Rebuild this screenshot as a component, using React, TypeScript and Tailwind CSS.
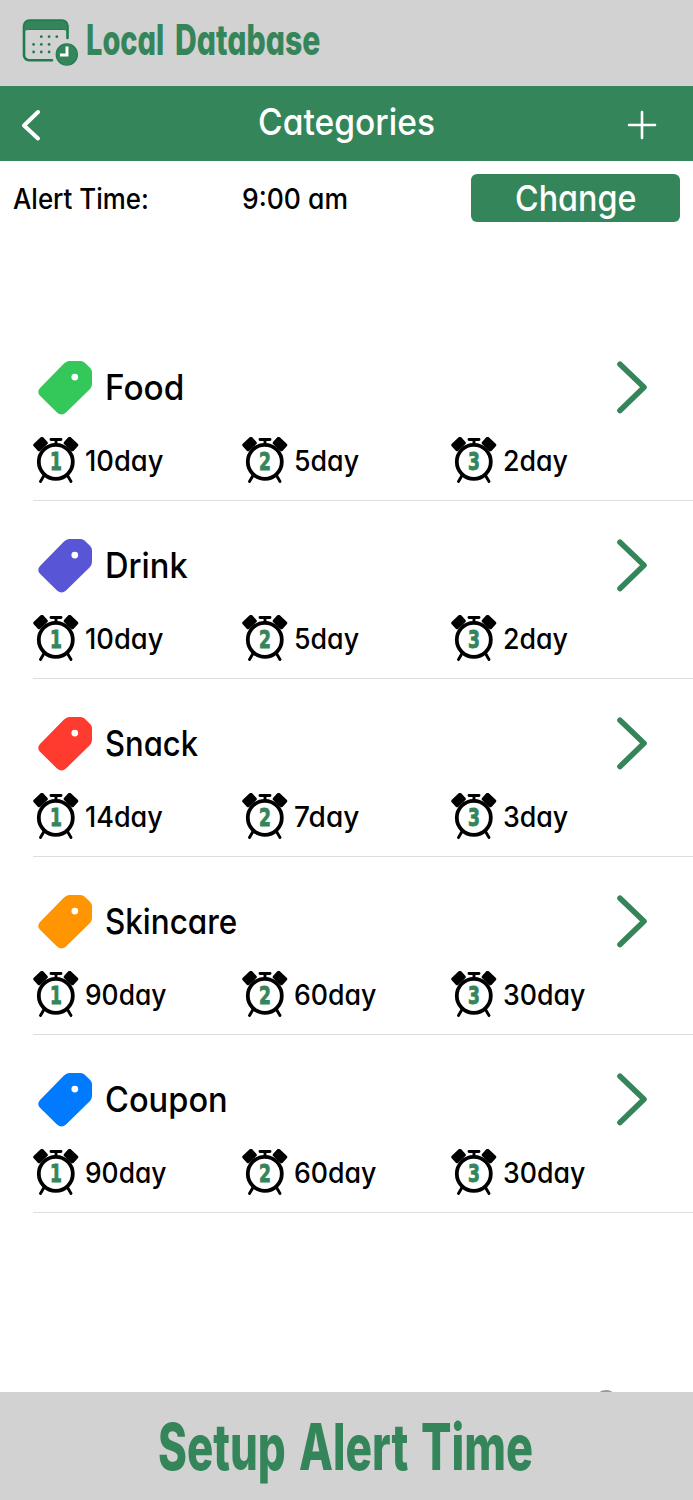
import { useLayoutEffect, useRef, useState } from "react";

type FitProps = { text: string; width: number; className?: string };

// Condenses or stretches a line of text so that it takes exactly `width` pixels.
function FitText({ text, width, className = "" }: FitProps) {
  const ref = useRef<HTMLSpanElement>(null);
  const [scale, setScale] = useState(1);
  useLayoutEffect(() => {
    if (ref.current) setScale(width / ref.current.offsetWidth);
  }, [text, width]);
  return (
    <span className="block shrink-0 leading-none" style={{ width }}>
      <span
        ref={ref}
        className={`inline-block origin-left whitespace-nowrap align-top leading-none ${className}`}
        style={{ transform: `scaleX(${scale})` }}
      >
        {text}
      </span>
    </span>
  );
}

function CalendarIcon() {
  return (
    <svg className="h-[48px] w-[58px] shrink-0" viewBox="0 0 58 48" fill="none">
      <path d="M46.500 20V8a5.500 5.500 0 0 0-5.500-5.500H8.500A5.500 5.500 0 0 0 3 8v29a5 5 0 0 0 5 5.200h23" stroke="#1f7d4d" strokeWidth="2.600" strokeLinecap="round" />
      <path d="M3 13V8a5.500 5.500 0 0 1 5.500-5.500H41A5.500 5.500 0 0 1 46.500 8v5q-1-1.500-4-1.500H7.500Q4 11.500 3 13Z" fill="#35855b" stroke="#1f7d4d" strokeWidth="1" />
      <g fill="#1f7d4d">
        <circle cx="20.300" cy="18.700" r="1.400" />
        <circle cx="28.100" cy="18.700" r="1.400" />
        <circle cx="35.800" cy="18.700" r="1.400" />
        <circle cx="12.600" cy="26.400" r="1.400" />
        <circle cx="20.300" cy="26.400" r="1.400" />
        <circle cx="28.100" cy="26.400" r="1.400" />
        <circle cx="12.600" cy="34" r="1.400" />
        <circle cx="20.300" cy="34" r="1.400" />
        <circle cx="28.100" cy="34" r="1.400" />
      </g>
      <circle cx="45.800" cy="36.500" r="10.600" fill="#35855b" stroke="#1f7d4d" strokeWidth="1.200" />
      <path d="M46 28.500v8.500h-7" stroke="#fff" strokeWidth="2.900" />
    </svg>
  );
}

function TagIcon({ className }: { className: string }) {
  return (
    <svg className={`h-[54px] w-[54px] shrink-0 ${className}`} viewBox="0 0 54 54">
      <path
        fill="currentColor"
        fillRule="evenodd"
        d="M31 0H42.500Q45 0 46.800 1.700L52.200 6.900Q54 8.600 54 11V23Q54 26 51.800 28.200L28 51.500Q23.500 55.500 19 51.500L2 34.800Q-1.500 31 2 27L26 2.500Q28.500 0 31 0ZM36.800 12.700a3.400 3.400 0 1 0 0 6.800 3.400 3.400 0 1 0 0-6.800Z"
      />
    </svg>
  );
}

function AlarmIcon({ n }: { n: number }) {
  return (
    <span className="relative block h-[46px] w-[46px] shrink-0">
      <svg className="block h-full w-full" viewBox="0 0 46 46" fill="none">
        <g fill="#000">
          <rect x="-6.500" y="-4.800" width="13" height="9.600" rx="1.800" transform="translate(7.500 7) rotate(-43)" />
          <rect x="-6.500" y="-4.800" width="13" height="9.600" rx="1.800" transform="translate(38 7) rotate(43)" />
        </g>
        <path d="M18 2.500h10M23 2.500v5M11 38.500l-3.500 6M34.500 38.500l3.500 6" stroke="#000" strokeWidth="2.900" strokeLinecap="round" />
        <circle cx="22.800" cy="24.800" r="17" stroke="#000" strokeWidth="3.800" fill="#fff" />
      </svg>
      <span className="absolute inset-x-0 top-[12px] text-center font-['DejaVu_Sans_Condensed','DejaVu_Sans',sans-serif] text-[25px] font-bold leading-[26px] text-[#35855b] [-webkit-text-stroke:0.9px_#35855b]">
        <span className="inline-block scale-x-[0.76]">{n}</span>
      </span>
    </span>
  );
}

const dayWidths: Record<string, number> = {
  "10day": 78, "14day": 78, "5day": 65, "2day": 65, "7day": 65, "3day": 65, "90day": 81, "60day": 82, "30day": 82,
};

const categories = [
  { name: "Food", width: 79, color: "text-[#34c759]", days: ["10day", "5day", "2day"] },
  { name: "Drink", width: 83, color: "text-[#5856d6]", days: ["10day", "5day", "2day"] },
  { name: "Snack", width: 93, color: "text-[#ff3b30]", days: ["14day", "7day", "3day"] },
  { name: "Skincare", width: 132, color: "text-[#ff9500]", days: ["90day", "60day", "30day"] },
  { name: "Coupon", width: 123, color: "text-[#007aff]", days: ["90day", "60day", "30day"] },
];

export default function App() {
  return (
    <div className="flex h-[1500px] w-[693px] flex-col overflow-hidden bg-white font-['Inter',sans-serif] font-medium text-black [font-feature-settings:'cv11'_1]">
      <header className="flex h-[86px] shrink-0 items-start bg-[#d2d2d2] pl-[21px] pt-[18px] text-[#35855b]">
        <CalendarIcon />
        <div className="flex gap-[11px] pl-[7px] pt-px">
          <FitText text="Local" width={78} className="text-[42px] font-extrabold" />
          <FitText text="Database" width={145} className="text-[42px] font-extrabold" />
        </div>
      </header>

      <nav className="flex h-[75px] shrink-0 items-center justify-between bg-[#35855b] pl-[20px] pr-[36px] text-white">
        <svg className="mt-[3px] h-[32px] w-[22px]" viewBox="0 0 22 32" fill="none" stroke="currentColor" strokeWidth="4" strokeLinecap="round" strokeLinejoin="round">
          <path d="M18 3 4 16.500 18 29.500" />
        </svg>
        <h1 className="mb-[5px] ml-[24px]">
          <FitText text="Categories" width={177} className="text-[37px]" />
        </h1>
        <svg className="mt-[3px] h-[30px] w-[30px]" viewBox="0 0 30 30" fill="none" stroke="currentColor" strokeWidth="2.600" strokeLinecap="round">
          <path d="M15 2v26M2 15h26" />
        </svg>
      </nav>

      <section className="flex h-[74px] shrink-0 items-center pl-[13px] pr-[13px]">
        <div className="w-[229px] pt-[2px]">
          <FitText text="Alert Time:" width={136} className="text-[28px]" />
        </div>
        <div className="pt-[2px]">
          <FitText text="9:00 am" width={106} className="text-[28px]" />
        </div>
        <button className="ml-auto flex h-[48px] w-[209px] items-center justify-center rounded-[6px] bg-[#35855b] text-white">
          <FitText text="Change" width={121} className="text-[36px]" />
        </button>
      </section>

      <main className="flex-1 pl-[33px] pt-[88px]">
        {categories.map((c) => (
          <article key={c.name} className="flex h-[178.100px] flex-col border-b border-[#dedede] pt-[38px]">
            <div className="flex items-center pl-[5px] pr-[43px]">
              <TagIcon className={c.color} />
              <div className="pb-px pl-[13px]">
                <FitText text={c.name} width={c.width} className="text-[35px]" />
              </div>
              <svg className="ml-auto h-[54px] w-[34px] shrink-0" viewBox="0 0 34 54" fill="none" stroke="#35855b" strokeWidth="5.600" strokeLinecap="round" strokeLinejoin="round">
                <path d="M4 3.200 28 26.300 4 49.500" />
              </svg>
            </div>
            <div className="mt-[22px] flex">
              {c.days.map((d, i) => (
                <div key={d} className="flex w-[209px] items-center gap-[6px]">
                  <AlarmIcon n={i + 1} />
                  <div className="pt-[2px]">
                    <FitText text={d} width={dayWidths[d]} className="text-[28px]" />
                  </div>
                </div>
              ))}
            </div>
          </article>
        ))}
      </main>

      <div className="flex h-[2px] shrink-0 overflow-hidden pl-[594px]">
        <span className="h-[24px] w-[24px] shrink-0 rounded-full bg-[#999]" />
      </div>
      <footer className="flex h-[108.500px] shrink-0 items-center gap-[13px] bg-[#d2d2d2] pl-[158px] pt-[3px] text-[#35855b]">
        <FitText text="Setup" width={128} className="text-[64px] font-extrabold" />
        <FitText text="Alert" width={109} className="text-[64px] font-extrabold" />
        <FitText text="Time" width={112} className="text-[64px] font-extrabold" />
      </footer>
    </div>
  );
}
